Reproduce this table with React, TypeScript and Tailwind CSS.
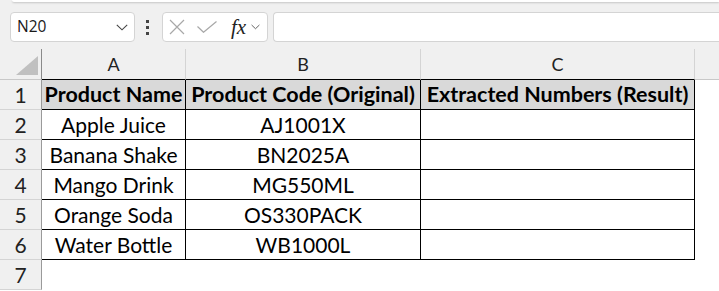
import React from "react";

const rows = [
  ["Apple Juice", "AJ1001X"],
  ["Banana Shake", "BN2025A"],
  ["Mango Drink", "MG550ML"],
  ["Orange Soda", "OS330PACK"],
  ["Water Bottle", "WB1000L"],
];

const cellFont = { fontFamily: "Lato, 'Open Sans', sans-serif" };

function Chevron({ className }: { className?: string }) {
  return (
    <svg className={className} viewBox="0 0 12 7" fill="none" stroke="#444" strokeWidth="1.1">
      <path d="M0.8 0.8 L6 5.8 L11.2 0.8" />
    </svg>
  );
}

export default function App() {
  return (
    <div className="w-[719px] h-[291px] overflow-hidden bg-white flex flex-col" style={{ fontFamily: "'Open Sans', sans-serif" }}>
      {/* toolbar */}
      <div className="h-[49px] bg-[#f0f0f0] flex flex-col">
        <div className="h-[2px] ml-[12px] bg-white rounded-bl-[3px] shadow-[0_1px_2px_rgba(0,0,0,0.18)]" />
        <div className="mt-[10px] h-[30px] flex items-center">
          <div className="ml-[10px] w-[125px] h-[30px] bg-white border border-[#d4d4d4] rounded-[4px] flex items-center justify-between pl-[6px] pr-[6px]">
            <span className="text-[15.5px] text-[#1a1a1a] leading-none">N20</span>
            <Chevron className="w-[12px] h-[7px]" />
          </div>
          <div className="ml-[11px] w-[4px] flex flex-col gap-[3px]">
            <div className="w-[3px] h-[3px] bg-[#444]" />
            <div className="w-[3px] h-[3px] bg-[#444]" />
            <div className="w-[3px] h-[3px] bg-[#444]" />
          </div>
          <div className="ml-[12px] w-[106px] h-[30px] bg-white border border-[#d4d4d4] rounded-[4px] flex items-center pl-[6px]">
            <svg className="w-[16px] h-[16px]" viewBox="0 0 16 16" stroke="#a8a8a8" strokeWidth="1.2" fill="none">
              <path d="M1 1 L15 15 M15 1 L1 15" />
            </svg>
            <svg className="ml-[12px] w-[20px] h-[12px]" viewBox="0 0 20 12" stroke="#a8a8a8" strokeWidth="1.2" fill="none">
              <path d="M0.5 5.5 L6.5 11.3 L19.5 0.5" />
            </svg>
            <span className="ml-[14px] text-[21px] leading-none italic text-[#222]" style={{ fontFamily: "'Liberation Serif', serif" }}>fx</span>
            <Chevron className="ml-[5px] w-[9px] h-[6px]" />
          </div>
          <div className="ml-[5px] flex-1 h-[30px] bg-white border border-r-0 border-[#d4d4d4] rounded-l-[4px]" />
        </div>
      </div>

      {/* grid */}
      <div className="grid grid-cols-[42px_144px_235px_274px_1fr] grid-rows-[31px_repeat(7,30px)]" style={cellFont}>
        {/* header row */}
        <div className="bg-[#f0f0f0] border-r border-r-[#8a8a8a] border-b border-b-[#c8c8c8] relative">
          <div className="absolute right-[3px] bottom-[4px] w-0 h-0 border-l-[22px] border-l-transparent border-b-[19px] border-b-[#c0c0c0]" />
        </div>
        {["A", "B", "C"].map((c) => (
          <div key={c} className="bg-[#f0f0f0] border-r border-r-[#d4d4d4] border-b border-b-black flex items-center justify-center text-[18px] text-[#222]">
            {c}
          </div>
        ))}
        <div className="bg-[#f0f0f0] border-b border-b-[#c8c8c8]" />

        {/* row 1 */}
        <div className="bg-[#f0f0f0] border-r border-r-[#9a9a9a] border-b border-b-[#d4d4d4] flex items-center justify-center text-[21px] text-[#222]">1</div>
        {["Product Name", "Product Code (Original)", "Extracted Numbers (Result)"].map((h) => (
          <div key={h} className="bg-[#d9d9d9] border-r border-r-black border-b border-b-black flex items-center justify-center text-[21.5px] font-bold text-black whitespace-nowrap">
            {h}
          </div>
        ))}
        <div />

        {rows.map((r, i) => (
          <React.Fragment key={i}>
            <div className="bg-[#f0f0f0] border-r border-r-[#9a9a9a] border-b border-b-[#d4d4d4] flex items-center justify-center text-[21px] text-[#222]">{i + 2}</div>
            <div className="border-r border-r-black border-b border-b-black flex items-center justify-center text-[21px] text-black whitespace-nowrap">{r[0]}</div>
            <div className="border-r border-r-black border-b border-b-black flex items-center justify-center text-[21px] text-black whitespace-nowrap">{r[1]}</div>
            <div className="border-r border-r-black border-b border-b-black" />
            <div />
          </React.Fragment>
        ))}

        <div className="bg-[#f0f0f0] border-r border-r-[#9a9a9a] border-b border-b-[#d4d4d4] flex items-center justify-center text-[21px] text-[#222]">7</div>
        <div />
        <div />
        <div />
        <div />
      </div>
    </div>
  );
}
